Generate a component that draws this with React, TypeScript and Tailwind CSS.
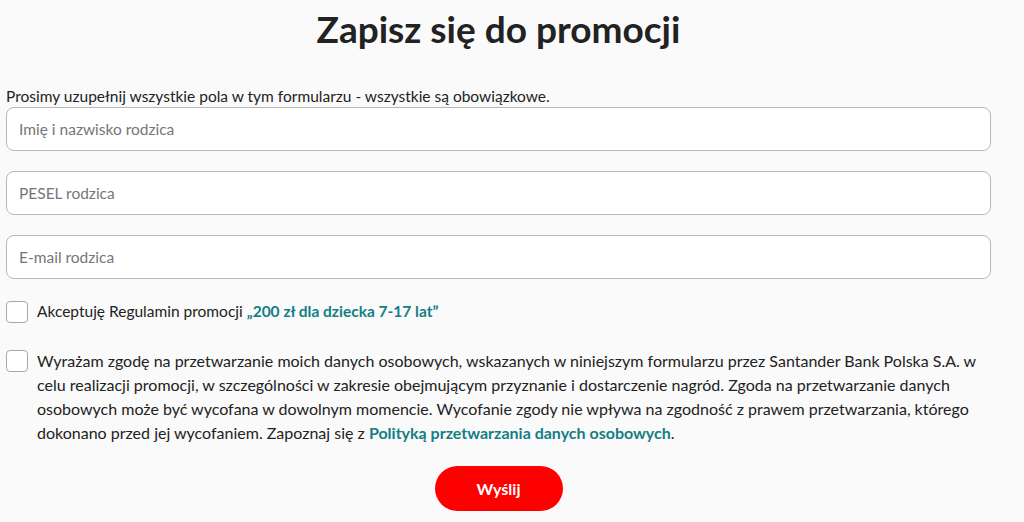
export default function App() {
  const fields = ["Imię i nazwisko rodzica", "PESEL rodzica", "E-mail rodzica"];
  return (
    <div className="min-h-[522px] bg-[#fafafa] text-[#222] font-['Lato',sans-serif] overflow-hidden">
      <div className="w-[985px] ml-[6px]">
        <h1 className="pt-[6px] text-center text-[37px] leading-[46px] font-bold text-[#222]">Zapisz się do promocji</h1>
        <p className="mt-[35px] text-[15.5px] leading-[18px]">
          Prosimy uzupełnij wszystkie pola w tym formularzu - wszystkie są obowiązkowe.
        </p>
        <div className="mt-[2px] flex flex-col gap-[20px]">
          {fields.map((f) => (
            <input
              key={f}
              placeholder={f}
              className="h-[44px] w-full rounded-[8px] border border-[#b8b8b8] bg-white px-[12px] text-[15.5px] placeholder:text-[#767676] outline-none"
            />
          ))}
        </div>
        <label className="mt-[21px] flex items-center gap-[9px]">
          <span className="h-[22px] w-[22px] shrink-0 rounded-[4px] border border-[#a8a8a8] bg-white" />
          <span className="text-[15.5px]">
            Akceptuję Regulamin promocji{" "}
            <span className="font-bold text-[#137e84]">„200 zł dla dziecka 7-17 lat”</span>
          </span>
        </label>
        <label className="mt-[26px] flex items-start gap-[9px] w-[1000px]">
          <span className="mt-[1px] h-[22px] w-[22px] shrink-0 rounded-[4px] border border-[#a8a8a8] bg-white" />
          <span className="text-[16px] leading-[24px]">
            Wyrażam zgodę na przetwarzanie moich danych osobowych, wskazanych w niniejszym formularzu przez Santander Bank Polska S.A. w celu realizacji promocji, w szczególności w zakresie obejmującym przyznanie i dostarczenie nagród. Zgoda na przetwarzanie danych osobowych może być wycofana w dowolnym momencie. Wycofanie zgody nie wpływa na zgodność z prawem przetwarzania, którego dokonano przed jej wycofaniem. Zapoznaj się z{" "}
            <span className="font-bold text-[#137e84]">Polityką przetwarzania danych osobowych</span>.
          </span>
        </label>
        <div className="mt-[21px] flex justify-center">
          <button className="h-[45px] w-[128px] rounded-full bg-[#fe0000] text-[16px] font-bold text-white">Wyślij</button>
        </div>
      </div>
    </div>
  );
}
